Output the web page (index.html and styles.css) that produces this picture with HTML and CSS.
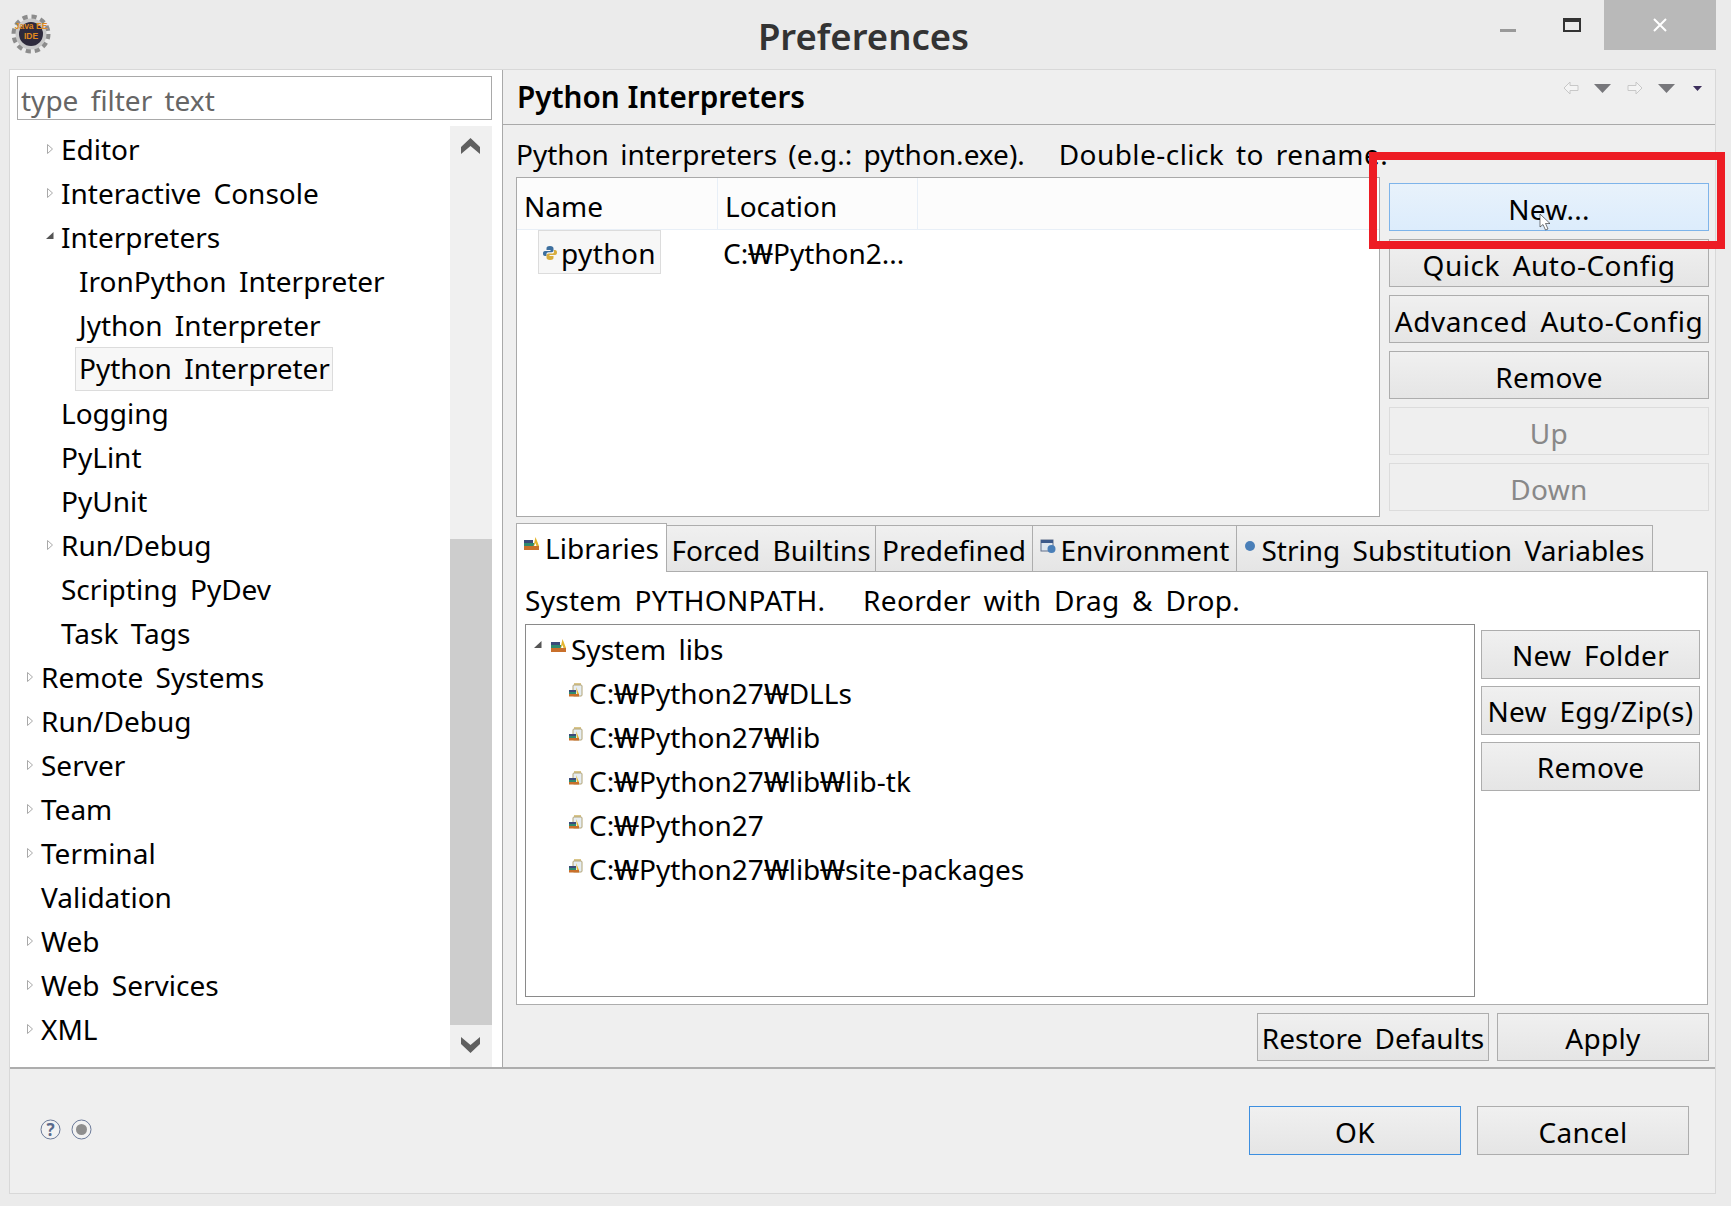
FILE: index.html
```html
<!DOCTYPE html>
<html lang="en">
<head>
  <meta charset="UTF-8">
  <title>Preferences</title>
  <link rel="stylesheet" href="styles.css">
</head>
<body>
  <svg class="defs" width="0" height="0">
    <symbol id="tw-closed" viewBox="0 0 15 16"><path d="M1.5 3.5 L6.5 8 L1.5 12.5 Z" fill="#fff" stroke="#a9a9a9"/></symbol>
    <symbol id="tw-open" viewBox="0 0 15 16"><path d="M7.5 3 V10 H0 Z" fill="#555"/></symbol>
    <symbol id="ic-libs" viewBox="0 0 16 16">
      <rect x="0" y="4" width="9" height="3" fill="#3b4a7a"/>
      <rect x="0" y="7" width="10" height="3" fill="#2f8a6f"/>
      <rect x="0" y="10" width="15" height="4" fill="#c9702b"/>
      <path d="M11.500 1 L15 10 H12.500 L11.500 7 L10 10 H9.500 Z" fill="#e3b52e"/>
    </symbol>
    <symbol id="ic-jar" viewBox="0 0 16 16">
      <rect x="6" y="1" width="7" height="2" fill="#d9c58a"/>
      <rect x="5" y="3" width="9" height="11" rx="1" fill="#e6edf2" stroke="#b2a477"/>
      <rect x="1" y="8" width="7" height="2" fill="#3b4a7a"/>
      <rect x="1" y="10" width="7" height="2" fill="#2f8a6f"/>
      <rect x="1" y="12" width="10" height="2.500" fill="#c9702b"/>
      <path d="M8 5 L11 12 H9 Z" fill="#e3b52e"/>
    </symbol>
  </svg>

  <div class="window">
    <header class="titlebar">
      <svg class="logo" width="42" height="42" viewBox="0 0 42 42">
        <circle cx="21" cy="21" r="17" fill="none" stroke="#8c8c8c" stroke-width="5" stroke-dasharray="5 3.9"/>
        <circle cx="21" cy="21" r="15.500" fill="#c9c9c9"/>
        <circle cx="21" cy="21" r="12" fill="#2e2a3c"/>
        <text class="logo-text" x="21" y="16" text-anchor="middle">Java EE</text>
        <text class="logo-text" x="21" y="26" text-anchor="middle">IDE</text>
      </svg>
      <h1 class="window-title">Preferences</h1>
      <div class="window-controls">
        <span class="ctl ctl-min"><i></i></span>
        <span class="ctl ctl-max"><i></i></span>
        <span class="ctl ctl-close">
          <svg width="16" height="16" viewBox="0 0 16 16"><path d="M2 2 L14 14 M14 2 L2 14" stroke="#fff" stroke-width="2"/></svg>
        </span>
      </div>
    </header>

    <div class="panel">
      <div class="main">
        <aside class="side">
          <input class="filter" type="text" placeholder="type filter text">
          <div class="side-body">
            <ul class="tree">
              <li class="row l1"><svg class="twist"><use href="#tw-closed"/></svg><span>Editor</span></li>
              <li class="row l1"><svg class="twist"><use href="#tw-closed"/></svg><span>Interactive Console</span></li>
              <li class="row l1"><svg class="twist"><use href="#tw-open"/></svg><span>Interpreters</span></li>
              <li class="row l2"><span>IronPython Interpreter</span></li>
              <li class="row l2"><span>Jython Interpreter</span></li>
              <li class="row l2"><span class="sel">Python Interpreter</span></li>
              <li class="row l1 leaf"><span>Logging</span></li>
              <li class="row l1 leaf"><span>PyLint</span></li>
              <li class="row l1 leaf"><span>PyUnit</span></li>
              <li class="row l1"><svg class="twist"><use href="#tw-closed"/></svg><span>Run/Debug</span></li>
              <li class="row l1 leaf"><span>Scripting PyDev</span></li>
              <li class="row l1 leaf"><span>Task Tags</span></li>
              <li class="row l0"><svg class="twist"><use href="#tw-closed"/></svg><span>Remote Systems</span></li>
              <li class="row l0"><svg class="twist"><use href="#tw-closed"/></svg><span>Run/Debug</span></li>
              <li class="row l0"><svg class="twist"><use href="#tw-closed"/></svg><span>Server</span></li>
              <li class="row l0"><svg class="twist"><use href="#tw-closed"/></svg><span>Team</span></li>
              <li class="row l0"><svg class="twist"><use href="#tw-closed"/></svg><span>Terminal</span></li>
              <li class="row l0 leaf"><span>Validation</span></li>
              <li class="row l0"><svg class="twist"><use href="#tw-closed"/></svg><span>Web</span></li>
              <li class="row l0"><svg class="twist"><use href="#tw-closed"/></svg><span>Web Services</span></li>
              <li class="row l0"><svg class="twist"><use href="#tw-closed"/></svg><span>XML</span></li>
            </ul>
            <div class="scrollbar">
              <div class="sb-btn"><svg width="19" height="16" viewBox="0 0 19 16"><path d="M0 16 V9 L9.500 0 L19 9 V16 L9.500 8 Z" fill="#606060"/></svg></div>
              <div class="sb-thumb"></div>
              <div class="sb-btn"><svg width="19" height="16" viewBox="0 0 19 16"><path d="M0 0 V7 L9.500 16 L19 7 V0 L9.500 8 Z" fill="#606060"/></svg></div>
            </div>
          </div>
        </aside>

        <section class="page">
          <div class="page-head">
            <h2 class="page-title">Python Interpreters</h2>
            <svg class="page-nav" width="146" height="20" viewBox="0 0 146 20">
              <path d="M4 10 L10 4 V7.500 H18 V12.500 H10 V16 Z" fill="#f4f4f4" stroke="#c8c8c8"/>
              <path d="M34 6 H51 L42.500 15 Z" fill="#77777b"/>
              <path d="M82 10 L76 4 V7.500 H68 V12.500 H76 V16 Z" fill="#f4f4f4" stroke="#c8c8c8"/>
              <path d="M98 6 H115 L106.500 15 Z" fill="#77777b"/>
              <path d="M133 8 H142 L137.500 13 Z" fill="#3d2f5c"/>
            </svg>
          </div>
          <div class="page-body">
            <p class="hint">Python interpreters (e.g.: python.exe).&nbsp;&nbsp; <span class="hint-end">Double-click to rename.</span></p>
            <div class="interp">
              <div class="table">
                <div class="table-head">
                  <div class="col col-name">Name</div>
                  <div class="col col-loc">Location</div>
                </div>
                <div class="table-row">
                  <div class="cell-name">
                    <svg width="16" height="16" viewBox="0 0 16 16">
                      <path d="M8 1 C5 1 4.500 2 4.500 3.500 V5 H8.500 V6 H3 C1.500 6 1 7 1 8.500 C1 10 1.500 11 3 11 H4.500 V9 C4.500 8 5.200 7.200 6.500 7.200 H9.500 C10.700 7.200 11.500 6.500 11.500 5.500 V3.500 C11.500 2 10.500 1 8 1 Z" fill="#3d6f9e"/>
                      <path d="M8 15 C11 15 11.500 14 11.500 12.500 V11 H7.500 V10 H13 C14.500 10 15 9 15 7.500 C15 6 14.500 5 13 5 H12 V7 C12 8 11 8.500 10 8.500 H6.500 C5.300 8.500 4.500 9.500 4.500 10.500 V12.500 C4.500 14 5.500 15 8 15 Z" fill="#d8ad3d"/>
                    </svg>
                    <span>python</span>
                  </div>
                  <div class="cell-loc">C:<span class="won">₩</span>Python2...</div>
                </div>
              </div>
              <div class="btn-col">
                <button class="btn btn-hover">New...</button>
                <button class="btn btn-wide">Quick Auto-Config</button>
                <button class="btn btn-wide">Advanced Auto-Config</button>
                <button class="btn">Remove</button>
                <button class="btn btn-off">Up</button>
                <button class="btn btn-off">Down</button>
              </div>
            </div>

            <div class="tabs">
              <div class="tab tab-on tab-libs"><svg width="16" height="16"><use href="#ic-libs"/></svg>Libraries</div>
              <div class="tab tab-forced">Forced Builtins</div>
              <div class="tab tab-pre">Predefined</div>
              <div class="tab tab-env">
                <svg width="16" height="16" viewBox="0 0 16 16"><rect x="1" y="2" width="12" height="11" fill="#dfe6ee" stroke="#5f6f8a"/><rect x="1" y="2" width="12" height="3" fill="#3d5a8a"/><circle cx="11.500" cy="11" r="4" fill="#4a7fb8"/></svg>
                Environment
              </div>
              <div class="tab tab-str">
                <svg width="12" height="12" viewBox="0 0 12 12"><circle cx="6" cy="6" r="5" fill="#4a7fb8"/></svg>
                String Substitution Variables
              </div>
            </div>
            <div class="tab-body">
              <p class="tab-hint">System PYTHONPATH.&nbsp;&nbsp; Reorder with Drag &amp; Drop.</p>
              <div class="libs">
                <ul class="lib-tree">
                  <li class="lib-row lib-root"><svg class="lib-twist"><use href="#tw-open"/></svg><svg width="16" height="16"><use href="#ic-libs"/></svg><span>System libs</span></li>
                  <li class="lib-row"><svg width="16" height="16"><use href="#ic-jar"/></svg><span>C:<span class="won">₩</span>Python27<span class="won">₩</span>DLLs</span></li>
                  <li class="lib-row"><svg width="16" height="16"><use href="#ic-jar"/></svg><span>C:<span class="won">₩</span>Python27<span class="won">₩</span>lib</span></li>
                  <li class="lib-row"><svg width="16" height="16"><use href="#ic-jar"/></svg><span>C:<span class="won">₩</span>Python27<span class="won">₩</span>lib<span class="won">₩</span>lib-tk</span></li>
                  <li class="lib-row"><svg width="16" height="16"><use href="#ic-jar"/></svg><span>C:<span class="won">₩</span>Python27</span></li>
                  <li class="lib-row"><svg width="16" height="16"><use href="#ic-jar"/></svg><span>C:<span class="won">₩</span>Python27<span class="won">₩</span>lib<span class="won">₩</span>site-packages</span></li>
                </ul>
                <div class="lib-btns">
                  <button class="btn">New Folder</button>
                  <button class="btn">New Egg/Zip(s)</button>
                  <button class="btn">Remove</button>
                </div>
              </div>
            </div>

            <div class="page-actions">
              <button class="btn btn-restore">Restore Defaults</button>
              <button class="btn btn-apply">Apply</button>
            </div>
          </div>
        </section>
      </div>

      <footer class="footer">
        <div class="help">
          <svg width="21" height="21" viewBox="0 0 21 21"><circle cx="10.500" cy="10.500" r="9.500" fill="#f2f2f2" stroke="#6b7a99"/><text class="help-q" x="10.500" y="16.500" text-anchor="middle">?</text></svg>
          <svg width="21" height="21" viewBox="0 0 21 21"><circle cx="10.500" cy="10.500" r="9.500" fill="#f2f2f2" stroke="#6b7a99"/><circle cx="10.500" cy="10.500" r="5.500" fill="#8e8e8e"/></svg>
        </div>
        <div class="footer-btns">
          <button class="btn btn-dlg btn-default">OK</button>
          <button class="btn btn-dlg">Cancel</button>
        </div>
      </footer>
    </div>

    <div class="annot"></div>
    <svg class="cursor" width="14" height="22" viewBox="0 0 14 22"><path d="M1 1 V14 L4 11.500 L6.500 17 L9 16 L6.500 10.500 H11 Z" fill="#fff" stroke="#222" stroke-width="0.600"/></svg>
  </div>
</body>
</html>
```

FILE: styles.css
```css
* {
  box-sizing: border-box;
}
html, body {
  margin: 0;
  padding: 0;
}
body {
  font-family: "Noto Sans", "Open Sans", sans-serif;
  font-size: 28px;
  word-spacing: 5px;
  color: #000;
  background: #ebebeb;
}
ul, p, h1, h2 {
  margin: 0;
  padding: 0;
  list-style: none;
  font-weight: normal;
}
.defs {
  position: absolute;
}
.won {
  display: inline-block;
  padding: 0 3px;
  transform: scaleX(1.35);
}

.window {
  position: relative;
  width: 1731px;
  height: 1206px;
  overflow: hidden;
  background: #ebebeb;
}

/* title bar */
.titlebar {
  height: 69px;
  display: grid;
  grid-template-columns: 1fr auto 1fr;
  align-items: start;
}
.logo {
  margin: 13px 0 0 10px;
}
.logo-text {
  font-family: "Liberation Sans", sans-serif;
  font-size: 8.500px;
  font-weight: bold;
  word-spacing: 0;
  fill: #e08a1e;
}
.window-title {
  font-size: 36.500px;
  font-weight: 600;
  line-height: 72px;
  color: #333;
  margin-right: 4px;
  word-spacing: 0;
}
.window-controls {
  display: flex;
  justify-content: flex-end;
  padding-right: 15px;
}
.ctl {
  height: 50px;
  display: flex;
  align-items: center;
  justify-content: center;
}
.ctl-min {
  width: 64px;
}
.ctl-min i {
  display: block;
  width: 16px;
  height: 3px;
  margin-top: 11px;
  background: #999;
}
.ctl-max {
  width: 64px;
}
.ctl-max i {
  display: block;
  width: 18px;
  height: 14px;
  border: 2px solid #333;
  border-top-width: 4px;
}
.ctl-close {
  width: 112px;
  background: #b9b9b9;
}

/* main panel */
.panel {
  height: 1125px;
  margin: 0 15px 0 9px;
  border: 1px solid #d8d8d8;
  background: #efefef;
}
.main {
  display: flex;
  height: 999px;
  border-bottom: 2px solid #adadad;
}

/* left tree */
.side {
  width: 493px;
  flex: none;
  padding: 6px 10px 0 7px;
  background: #fff;
  border-right: 1px solid #a9a9a9;
  display: flex;
  flex-direction: column;
}
.filter {
  width: 475px;
  height: 44px;
  flex: none;
  padding: 3px 3px 0;
  border: 1px solid #a9a9a9;
  font: inherit;
  word-spacing: inherit;
  outline: none;
}
.filter::placeholder {
  color: #666;
  opacity: 1;
}
.side-body {
  flex: 1;
  display: flex;
  margin-top: 6px;
  min-height: 0;
}
.tree {
  flex: 1;
  padding-top: 1px;
}
.row {
  display: flex;
  align-items: center;
  height: 44px;
}
.l0 { padding-left: 9px; }
.l1 { padding-left: 29px; }
.l2 { padding-left: 62px; }
.leaf span { margin-left: 15px; }
.twist {
  width: 15px;
  height: 16px;
  flex: none;
}
.sel {
  margin-left: -4px;
  padding: 0 2px 0 3px;
  height: 44px;
  line-height: 40px;
  background: #f7f7f7;
  border: 1px solid #dcdcdc;
}
.scrollbar {
  width: 42px;
  flex: none;
  display: flex;
  flex-direction: column;
  background: #f0f0f0;
}
.sb-btn {
  height: 40px;
  padding-right: 2px;
  display: flex;
  align-items: center;
  justify-content: center;
}
.sb-thumb {
  height: 486px;
  margin-top: 373px;
  background: #cdcdcd;
}

/* right page */
.page {
  flex: 1;
  min-width: 0;
}
.page-head {
  height: 55px;
  padding-left: 14px;
  padding-right: 9px;
  display: flex;
  justify-content: space-between;
  border-bottom: 1px solid #a9a9a9;
}
.page-title {
  font-size: 29.700px;
  font-weight: 600;
  line-height: 54px;
  word-spacing: 0;
}
.page-nav {
  margin-top: 8px;
}
.page-body {
  padding: 0 6px 0 13px;
}
.hint {
  height: 52px;
  line-height: 58px;
  word-spacing: 4px;
  white-space: nowrap;
}
.hint-end {
  letter-spacing: 0.450px;
}
.interp {
  display: flex;
  gap: 9px;
}
.table {
  width: 864px;
  height: 340px;
  flex: none;
  background: #fff;
  border: 1px solid #a9a9a9;
}
.table-head {
  display: flex;
  height: 52px;
  background: #fcfcfc;
  border-bottom: 1px solid #e8eff7;
}
.col {
  line-height: 56px;
  padding-left: 7px;
  border-right: 1px solid #e8eff7;
}
.col-name {
  width: 201px;
}
.col-loc {
  width: 200px;
}
.table-row {
  display: flex;
}
.cell-name {
  margin-left: 21px;
  width: 123px;
  height: 44px;
  line-height: 44px;
  display: flex;
  background: #f7f7f7;
  border: 1px solid #dcdcdc;
}
.cell-name svg {
  margin-top: 14px;
  margin-left: 3px;
  flex: none;
}
.cell-name span {
  margin-left: 3px;
  letter-spacing: 0.400px;
}
.cell-loc {
  margin-left: 62px;
  line-height: 46px;
}
.btn-col {
  width: 320px;
  flex: none;
  padding-top: 6px;
  display: flex;
  flex-direction: column;
  gap: 8px;
}
.btn {
  height: 48px;
  padding: 4px 0 0;
  font: inherit;
  word-spacing: inherit;
  letter-spacing: 0.300px;
  color: #000;
  border: 1px solid #adadad;
  background: linear-gradient(#f0f0f0, #e5e5e5);
  white-space: nowrap;
  overflow: hidden;
}
.btn-wide {
  letter-spacing: 0.500px;
}
.btn-hover {
  border-color: #7eb4ea;
  background: linear-gradient(#e8f2fb, #dcecfc);
}
.btn-off {
  color: #888;
  border-color: #dcdcdc;
  background: #efefef;
}

/* tabs */
.tabs {
  display: flex;
  align-items: flex-end;
  height: 48px;
  margin-top: 6px;
}
.tab {
  height: 46px;
  padding-top: 2px;
  display: flex;
  align-items: center;
  justify-content: center;
  gap: 5px;
  border: 1px solid #adadad;
  border-bottom: none;
  border-left: none;
  background: linear-gradient(#f0f0f0, #e5e5e5);
  white-space: nowrap;
}
.tab svg {
  margin-top: -8px;
  flex: none;
}
.tab-on {
  height: 49px;
  padding-top: 0;
  margin-bottom: -1px;
  position: relative;
  border-left: 1px solid #adadad;
  background: #fff;
}
.tab-libs { width: 151px; }
.tab-forced { width: 209px; }
.tab-pre { width: 157px; }
.tab-env { width: 204px; }
.tab-str { width: 416px; }
.tab-body {
  width: 1192px;
  height: 434px;
  padding: 0 8px;
  background: #fff;
  border: 1px solid #adadad;
}
.tab-hint {
  height: 52px;
  line-height: 56px;
  letter-spacing: 0.300px;
  white-space: nowrap;
}
.libs {
  display: flex;
  gap: 6px;
}
.lib-tree {
  width: 950px;
  height: 373px;
  flex: none;
  padding-top: 2px;
  border: 1px solid #8a8a8a;
}
.lib-row {
  display: flex;
  align-items: center;
  gap: 5px;
  height: 44px;
  padding-left: 42px;
}
.lib-root {
  gap: 4px;
  padding-left: 8px;
}
.lib-twist {
  width: 15px;
  height: 16px;
  margin-right: -2px;
  flex: none;
}
.lib-row svg {
  margin-top: -6px;
}
.lib-btns {
  width: 219px;
  flex: none;
  padding-top: 6px;
  display: flex;
  flex-direction: column;
  gap: 7px;
}
.lib-btns .btn {
  height: 49px;
  padding-top: 0;
}
.page-actions {
  display: flex;
  justify-content: flex-end;
  gap: 8px;
  margin-top: 8px;
}
.page-actions .btn {
  padding-top: 2px;
}
.btn-restore {
  width: 232px;
  letter-spacing: 0;
}
.btn-apply { width: 212px; }

/* footer */
.footer {
  height: 124px;
  padding: 37px 26px 0 30px;
  display: flex;
  justify-content: space-between;
}
.help {
  display: flex;
  gap: 10px;
  padding-top: 13px;
  align-items: flex-start;
}
.help-q {
  font-size: 17px;
  font-weight: bold;
  fill: #5a6a8c;
}
.footer-btns {
  display: flex;
  gap: 16px;
}
.btn-dlg {
  width: 212px;
  height: 49px;
  padding-top: 2px;
}
.btn-default {
  border-color: #3d8fe0;
}

/* annotation over the screenshot */
.annot {
  position: absolute;
  left: 1369px;
  top: 152px;
  width: 356px;
  height: 97px;
  border: 8px solid #ed1c24;
}
.cursor {
  position: absolute;
  left: 1539px;
  top: 213px;
}
```
